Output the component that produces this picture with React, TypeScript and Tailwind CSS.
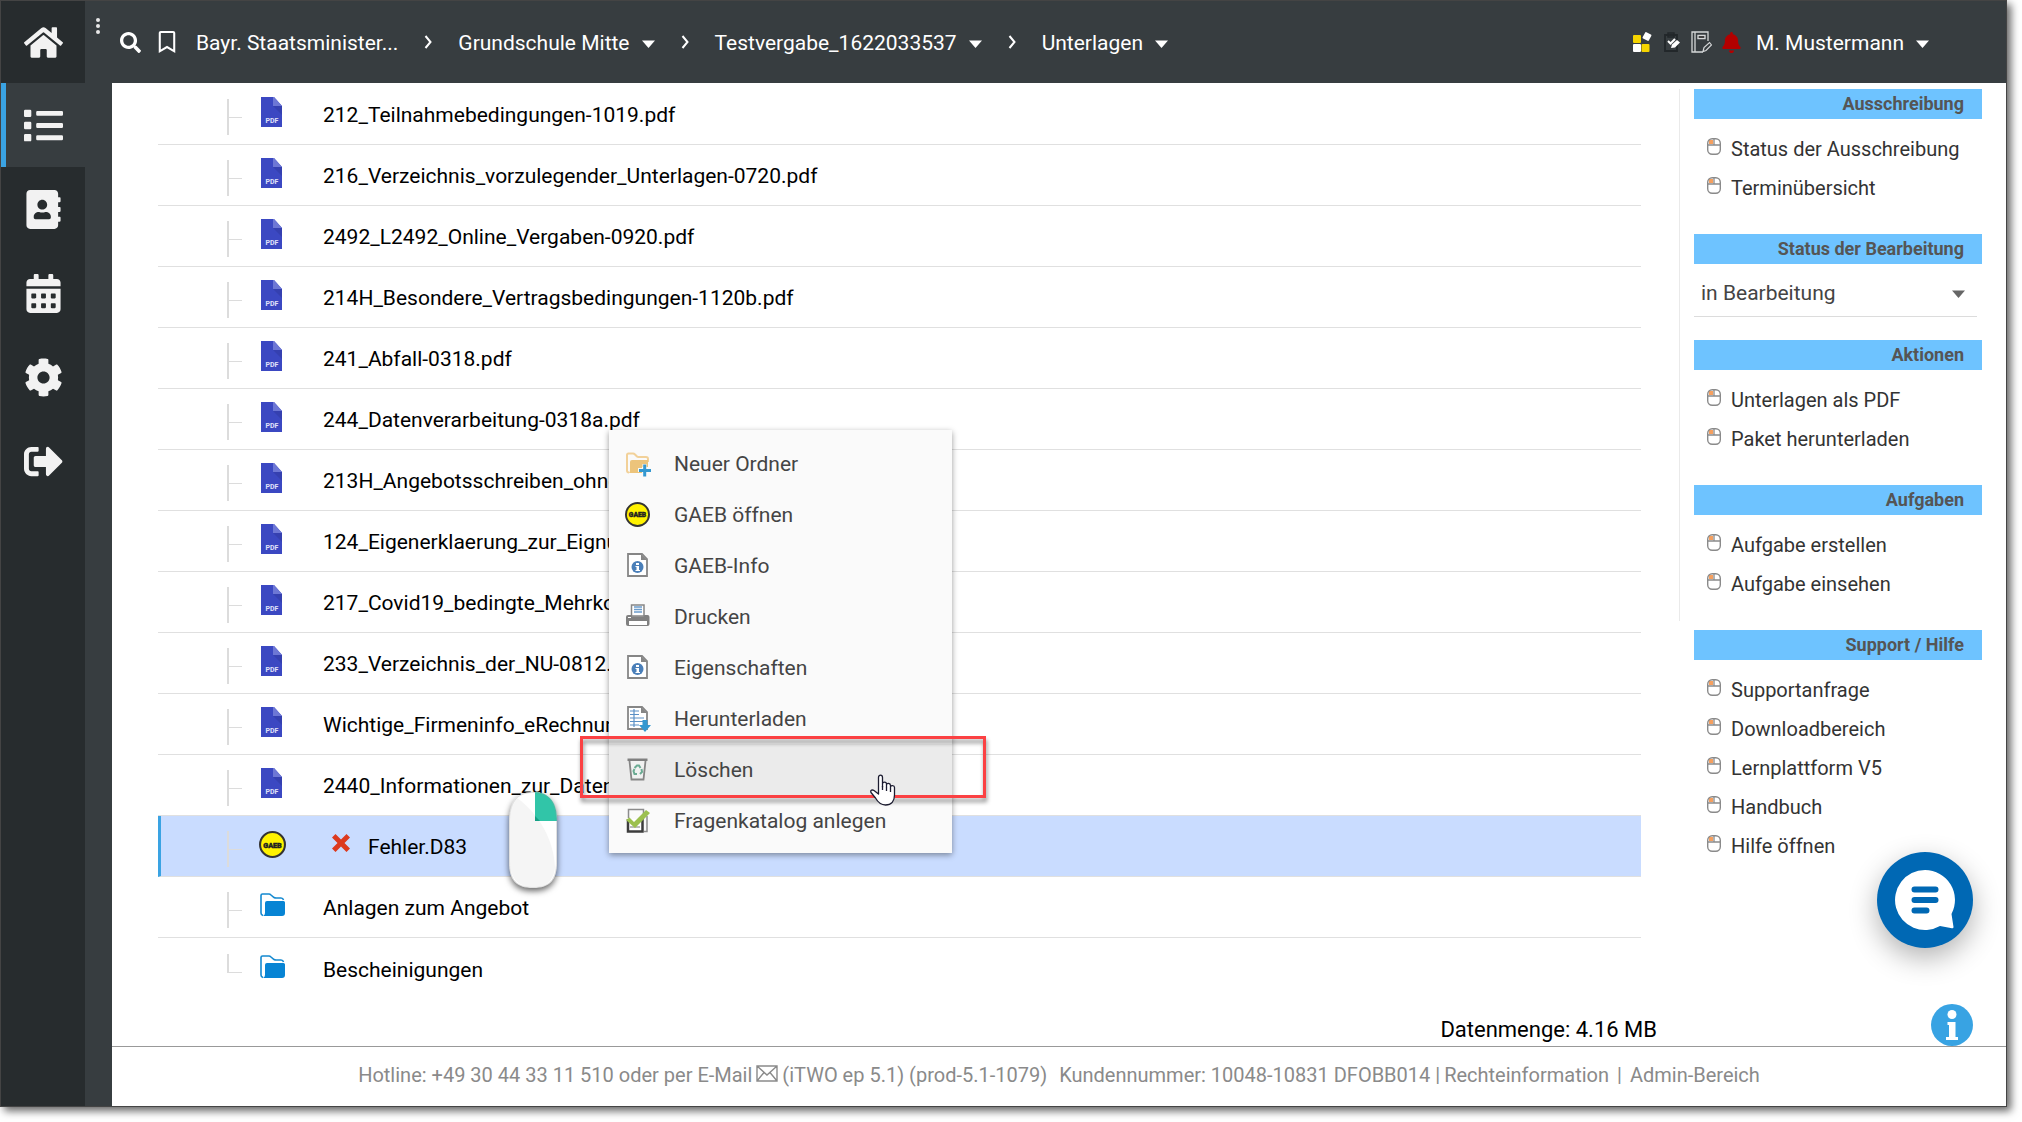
import React from 'react';
import { FaHome, FaList, FaAddressBook, FaCalendarAlt, FaCog, FaSignOutAlt, FaSearch, FaBell, FaRegBookmark } from 'react-icons/fa';

const files = [
  '212_Teilnahmebedingungen-1019.pdf',
  '216_Verzeichnis_vorzulegender_Unterlagen-0720.pdf',
  '2492_L2492_Online_Vergaben-0920.pdf',
  '214H_Besondere_Vertragsbedingungen-1120b.pdf',
  '241_Abfall-0318.pdf',
  '244_Datenverarbeitung-0318a.pdf',
  '213H_Angebotsschreiben_ohne_Lose-0920.pdf',
  '124_Eigenerklaerung_zur_Eignung-1019.pdf',
  '217_Covid19_bedingte_Mehrkosten.pdf',
  '233_Verzeichnis_der_NU-0812.pdf',
  'Wichtige_Firmeninfo_eRechnung.pdf',
  '2440_Informationen_zur_Datenerhebung.pdf',
];

const folders = ['Anlagen zum Angebot', 'Bescheinigungen'];

function Caret({ className = 'text-white' }: { className?: string }) {
  return (
    <svg width="13" height="8" viewBox="0 0 13 8" className={className} aria-hidden="true">
      <path d="M0 0.5h13L6.500 8z" fill="currentColor" />
    </svg>
  );
}

function Chevron() {
  return (
    <svg width="8" height="14" viewBox="0 0 8 14" fill="none" stroke="#fff" strokeWidth="2" className="mb-1" aria-hidden="true">
      <path d="M1.500 1l5 6-5 6" />
    </svg>
  );
}

function PdfIcon() {
  return (
    <svg width="22" height="30" viewBox="0 0 22 30" aria-hidden="true">
      <path d="M0 0h13l8 9v21H0z" fill="#3b48c2" />
      <path d="M12 0h1l8 9H12z" fill="#6d77d5" />
      <path d="M12 9h9v9z" fill="#3540b0" />
      <text x="11" y="26" textAnchor="middle" fontSize="7" fontWeight="700" fontFamily="Roboto, sans-serif" fill="#e0e2fa">PDF</text>
    </svg>
  );
}

function GaebIcon({ size }: { size: number }) {
  return (
    <svg width={size} height={size} viewBox="0 0 26 26" aria-hidden="true">
      <circle cx="13" cy="13" r="12" fill="#fff200" stroke="#333" strokeWidth="2" />
      <text x="13" y="16" textAnchor="middle" fontSize="7" fontWeight="900" fontFamily="Roboto, sans-serif" fill="#222" stroke="#222" strokeWidth="0.4">GAEB</text>
    </svg>
  );
}

function FolderIcon() {
  return (
    <svg width="25" height="24" viewBox="0 0 25 24" aria-hidden="true">
      <path d="M3 22.500Q1 22 1 20V2.500Q1 1 2.500 1H9q1 0 2 1l3 2.500q1 .5 2 .5h5q2 0 2.500 2" fill="none" stroke="#1489d0" strokeWidth="1.600" />
      <path d="M5 10q0-2 2-2h16.500q1.500 0 1.500 1.500V20q0 3-3 3H3q2-1 2-3z" fill="#0784d4" />
    </svg>
  );
}

function CrossIcon() {
  return (
    <svg width="20" height="20" viewBox="0 0 20 20" aria-hidden="true">
      <path d="M4.500 1L10 6.500 15.500 1 19 4.500 13.500 10l5.500 5.500-3.500 3.500L10 13.500 4.500 19 1 15.500 6.500 10 1 4.500z" fill="#dc3a1f" />
    </svg>
  );
}

function NewFolderIcon() {
  return (
    <svg width="26" height="26" viewBox="0 0 26 26" aria-hidden="true">
      <path d="M4 21.500q-2 0-2-2V4q0-1.500 1.500-1.500H8q1 0 2 1l2 2q.5.500 1.500.500H21q2 0 2 2v3" fill="none" stroke="#f2d199" strokeWidth="2" />
      <path d="M5 11q0-2 2-2h16v7h-6v6H4q1-1 1-3z" fill="#ecc47b" />
      <path d="M17.500 13h4v4H26v4h-4.500v4.500h-4V21H13v-4h4.500z" fill="#fafafa" />
      <path d="M18.200 13.500h3v4.500H26v3h-4.800v4.500h-3V21H14v-3h4.200z" fill="#3498d0" />
    </svg>
  );
}

function InfoPageIcon() {
  return (
    <svg width="26" height="26" viewBox="0 0 26 26" aria-hidden="true">
      <path d="M3 1h14l5 5v17H3z" fill="#fff" stroke="#868686" strokeWidth="1.800" />
      <path d="M16 1v6h6z" fill="#868686" />
      <circle cx="12.500" cy="14" r="6" fill="#4a7fb9" />
      <path d="M11 10h3v2h-3zM10.500 13H14v4h1v1h-4.500v-1h1v-3h-1z" fill="#fff" />
    </svg>
  );
}

function PrinterIcon() {
  return (
    <svg width="26" height="26" viewBox="0 0 26 26" aria-hidden="true">
      <path d="M6.500 1h12.500v11H6.500z" fill="#fff" stroke="#868686" strokeWidth="1.500" />
      <path d="M9 3h8M9 5.500h8M9 8h8" stroke="#6b9ccc" strokeWidth="1.500" />
      <path d="M3 11h3l1 1.500h11.500l1-1.500h3q2 0 2 2v7q0 2-2 2H3q-2 0-2-2v-7q0-2 2-2z" fill="#808080" />
      <path d="M4 17h18v4H4z" fill="#fff" />
      <path d="M3 13.500h3" stroke="#fff" />
    </svg>
  );
}

function DownloadIcon() {
  return (
    <svg width="26" height="26" viewBox="0 0 26 26" aria-hidden="true">
      <path d="M3 1h14l5 5v17H3z" fill="#fff" stroke="#868686" strokeWidth="1.800" />
      <path d="M16 1v6h6z" fill="#868686" />
      <path d="M5 5h9M5 8.500h9M5 12h14M5 15.500h14M5 19h9M9 3v18" stroke="#5a90c6" strokeWidth="1.200" />
      <path d="M17.500 14h5v5H26L20 26l-6-7h3.500z" fill="#3498d0" />
    </svg>
  );
}

function TrashIcon() {
  return (
    <svg width="26" height="26" viewBox="0 0 26 26" aria-hidden="true">
      <path d="M2.500 1.500h20V4h-20z" fill="#808080" />
      <path d="M4.500 4l2 18.500h12l2-18.500" fill="#f1f1f1" stroke="#868686" strokeWidth="1.800" />
      <path d="M9.500 11l2.500-2.500h2l1.500 2.500M16.500 12l.5 3-2 2M12 17H9.500L8.500 14l1-2" fill="none" stroke="#6bab93" strokeWidth="2" />
    </svg>
  );
}

function CheckIcon() {
  return (
    <svg width="26" height="26" viewBox="0 0 26 26" aria-hidden="true">
      <path d="M3.500 10V1.500h15V6M22 8v15.500h-3" fill="none" stroke="#8c8c8c" strokeWidth="1.500" />
      <path d="M3 11v12.500h14.500V11" fill="#fff" stroke="#3c3c3c" strokeWidth="2.500" />
      <path d="M5 19h10" stroke="#777" />
      <path d="M1 12l3.500-2.500L9 14 21 2l4 3L10 20z" fill="#9cc04f" />
    </svg>
  );
}

function MouseBullet() {
  return (
    <svg width="14" height="17" viewBox="0 0 14 17" fill="none" aria-hidden="true">
      <path d="M2 2h4v4H2z" fill="#f5a060" />
      <rect x="0.700" y="0.700" width="12.600" height="15.600" rx="4.500" stroke="#8a8a8a" strokeWidth="1.400" />
      <path d="M1 7h12M7 1v6" stroke="#8a8a8a" strokeWidth="1.300" />
    </svg>
  );
}

function TilesIcon() {
  return (
    <svg width="19" height="20" viewBox="0 0 19 20" aria-hidden="true">
      <rect x="0" y="3" width="8" height="8" rx="1" fill="#f5d400" />
      <rect x="0" y="12" width="8" height="8" rx="1" fill="#fff" />
      <rect x="8.500" y="12" width="8" height="8" rx="1" fill="#f5d400" />
      <rect x="10.500" y="1" width="7" height="7" rx="1" fill="#fff" transform="rotate(28 14 4.500)" />
    </svg>
  );
}

function ClipboardIcon() {
  return (
    <svg width="16" height="20" viewBox="0 0 16 20" aria-hidden="true">
      <path d="M1 3h12v16H1z" fill="none" stroke="#22272a" strokeWidth="1.800" />
      <path d="M4 1h6v4H4z" fill="none" stroke="#22272a" strokeWidth="1.500" />
      <path d="M4 9l2.500 2.500L11 7" fill="none" stroke="#fff" strokeWidth="2" />
      <path d="M7 16l1-3.500L13 8l3 2.500-5 5z" fill="#fff" />
    </svg>
  );
}

function NotebookIcon() {
  return (
    <svg width="21" height="22" viewBox="0 0 21 22" fill="none" stroke="#d5d7d8" aria-hidden="true">
      <path d="M17 10V1H1v20h11M4 1v20" strokeWidth="1.300" />
      <path d="M7 4.500h7v3H7z" strokeWidth="1.400" fill="#111" />
      <path d="M12 20.500l1-4 5.500-5 2 2.500-5.500 5.500z" strokeWidth="1.200" />
    </svg>
  );
}

function EnvelopeIcon() {
  return (
    <svg width="22" height="17" viewBox="0 0 22 17" fill="none" stroke="#8a8a8a" strokeWidth="1.400" aria-hidden="true">
      <path d="M1 1h20v15H1zM1 1l10 9L21 1M1 16l7-8.500M21 16l-7-8.500" />
    </svg>
  );
}

function RightClickMouse() {
  return (
    <svg width="48" height="96" viewBox="0 0 48 96" className="drop-shadow-[0_3px_3px_rgba(0,0,0,0.6)]" aria-hidden="true">
      <path d="M24 0C42 0 48 12 48 30v40c0 18-7 26-24 26S0 88 0 70V30C0 12 6 0 24 0z" fill="#fff" />
      <path d="M8 6C30 22 45 48 46 76c-2 14-9 19-22 19S1 88 1 70V30C1 19 3 11 8 6z" fill="#f5f5f5" />
      <path d="M26 0c16 1 22 12 22 29H26z" fill="#31c5a8" />
      <path d="M26 24l5 5h-5z" fill="#14a085" />
      <path d="M24 .5C41.500.5 47.500 12 47.500 30v40c0 18-7 25.500-23.500 25.500S.5 88 .5 70V30C.5 12 6.500.5 24 .5z" fill="none" stroke="#999" strokeOpacity="0.300" />
    </svg>
  );
}

function HandCursor() {
  return (
    <svg width="26" height="32" viewBox="0 0 26 32" aria-hidden="true">
      <path
        d="M8.500 20V3.500C8.500.3 12.500.3 12.500 3.500V13v-3c0-2.500 4-2.500 4 0v3-2c0-2.500 4-2 4 .5V14v-1c0-2 4-2 4 .5V21c0 6-3 10-9 10-5 0-8-3.500-10-7l-4.500-5.500c-1-2.500 1.500-3 3-2z"
        fill="#fff"
        stroke="#1c1c30"
        strokeWidth="1.300"
        strokeLinejoin="round"
      />
      <path d="M12.500 12v4M16.500 13v4M20.500 14v4" stroke="#1c1c30" strokeWidth="1.300" />
    </svg>
  );
}

const menuItems = [
  { label: 'Neuer Ordner', icon: <NewFolderIcon /> },
  { label: 'GAEB öffnen', icon: <GaebIcon size={25} /> },
  { label: 'GAEB-Info', icon: <InfoPageIcon /> },
  { label: 'Drucken', icon: <PrinterIcon /> },
  { label: 'Eigenschaften', icon: <InfoPageIcon /> },
  { label: 'Herunterladen', icon: <DownloadIcon /> },
  { label: 'Löschen', icon: <TrashIcon />, active: true },
  { label: 'Fragenkatalog anlegen', icon: <CheckIcon /> },
];

function ContextMenu() {
  return (
    <div role="menu" className="absolute top-[429px] left-[608px] w-[343px] bg-[#fafafa] pt-2 pb-[7px] text-[#444] shadow-[0_2px_6px_rgba(0,0,0,0.4)]">
      {menuItems.map((item) => (
        <button
          key={item.label}
          role="menuitem"
          className={`flex h-[51px] w-full items-center gap-[23px] pl-4 ${item.active ? 'bg-[#ebebeb]' : ''}`}
        >
          <span className="flex w-[26px]">{item.icon}</span>
          <span className="pt-[2px]">{item.label}</span>
        </button>
      ))}
    </div>
  );
}

function Sidebar() {
  const items = [
    { label: 'Start', icon: <FaHome size={39} /> },
    { label: 'Liste', icon: <FaList size={39} />, active: true },
    { label: 'Kontakte', icon: <FaAddressBook size={39} /> },
    { label: 'Kalender', icon: <FaCalendarAlt size={39} /> },
    { label: 'Einstellungen', icon: <FaCog size={39} /> },
    { label: 'Abmelden', icon: <FaSignOutAlt size={39} /> },
  ];

  return (
    <nav className="w-[84px] shrink-0 bg-[#272c2e] text-[#f2f2f2]">
      {items.map((item) => (
        <button
          key={item.label}
          aria-label={item.label}
          className={`flex h-[84px] w-full items-center justify-center first:h-[82px] ${item.active ? 'border-l-[5px] border-[#3aa3e3] bg-[#373d40] pr-[5px]' : ''}`}
        >
          {item.icon}
        </button>
      ))}
    </nav>
  );
}

function Crumb({ label }: { label: string }) {
  return (
    <button className="flex items-center gap-3 whitespace-nowrap">
      {label}
      <Caret />
    </button>
  );
}

function Header() {
  return (
    <header className="flex h-[82px] shrink-0 items-center bg-[#373d40] pr-[77px] text-white">
      <button aria-label="Mehr" className="mb-8 ml-[11px] flex flex-col gap-[2px]">
        <span className="h-1 w-1 rounded-full bg-[#e8e8e8]" />
        <span className="h-1 w-1 rounded-full bg-[#e8e8e8]" />
        <span className="h-1 w-1 rounded-full bg-[#e8e8e8]" />
      </button>
      <button aria-label="Suche" className="ml-5"><FaSearch size={21} /></button>
      <button aria-label="Lesezeichen" className="ml-[15px]"><FaRegBookmark size={22} /></button>
      <nav className="ml-[18px] flex items-center gap-[26px] pt-1">
        <button>Bayr. Staatsminister...</button>
        <Chevron />
        <Crumb label="Grundschule Mitte" />
        <Chevron />
        <Crumb label="Testvergabe_1622033537" />
        <Chevron />
        <Crumb label="Unterlagen" />
      </nav>
      <div className="ml-auto flex items-center">
        <button aria-label="Anwendungen"><TilesIcon /></button>
        <button aria-label="Aufgaben" className="ml-3"><ClipboardIcon /></button>
        <button aria-label="Notizen" className="ml-[11px]"><NotebookIcon /></button>
        <button aria-label="Meldungen" className="ml-[9px] text-[#b30000]"><FaBell size={21} /></button>
        <div className="ml-[14px] pt-1"><Crumb label="M. Mustermann" /></div>
      </div>
    </header>
  );
}

function Branch({ last }: { last?: boolean }) {
  return (
    <span className="mt-[6px] flex h-9 w-[15px] flex-col">
      <span className="h-[19px] border-b border-l-2 border-[#dcdcdc]" />
      {!last && <span className="flex-1 border-l-2 border-[#dcdcdc]" />}
    </span>
  );
}

function Row({ icon, name, last, selected }: { icon: React.ReactNode; name: string; last?: boolean; selected?: boolean }) {
  return (
    <li className={`flex h-[61px] items-center ${last ? '' : 'border-b border-[#e0e0e0]'} ${selected ? 'border-l-[3px] border-l-[#3aa3e3] bg-[#c9dcff] pl-[66px]' : 'pl-[69px]'}`}>
      <Branch last={last} />
      <span className="ml-3 flex w-9 justify-center pb-1">{icon}</span>
      <span className="ml-[33px] flex items-center gap-[17px] pt-1">
        {selected && <span className="pb-[10px] pl-2"><CrossIcon /></span>}
        {name}
      </span>
    </li>
  );
}

function SectionTitle({ title }: { title: string }) {
  return <h2 className="bg-[#6ec3ff] pr-[18px] text-right text-[18px] leading-[30px] font-bold text-[#555]">{title}</h2>;
}

function Section({ title, links }: { title: string; links: string[] }) {
  return (
    <section className="mb-[26px]">
      <SectionTitle title={title} />
      <ul className="pt-[10px] pb-px text-[20px]">
        {links.map((link) => (
          <li key={link} className="flex h-[39px] items-center gap-[10px] pl-[13px]">
            <span className="pb-1"><MouseBullet /></span>
            <a href="#">{link}</a>
          </li>
        ))}
      </ul>
    </section>
  );
}

function Footer() {
  return (
    <footer className="flex h-[60px] items-center justify-center border-t border-[#999] pb-[3px] text-[20px] whitespace-nowrap text-[#8a8a8a]">
      <span>Hotline: +49 30 44 33 11 510 oder per E-Mail</span>
      <a href="#" aria-label="E-Mail" className="mx-1 pb-1"><EnvelopeIcon /></a>
      <span>(iTWO ep 5.1) (prod-5.1-1079)</span>
      <span className="ml-3">Kundennummer: 10048-10831 DFOBB014 |</span>
      <a href="#" className="ml-1">Rechteinformation</a>
      <span className="mx-2">|</span>
      <a href="#">Admin-Bereich</a>
    </footer>
  );
}

export default function App() {
  return (
    <div className="min-h-screen bg-white pr-[15px] pb-[15px] font-['Roboto',sans-serif] text-[21px] text-black">
      <div className="relative flex min-h-[1107px] border border-[#444] shadow-[4px_4px_8px_rgba(0,0,0,0.6)]">
        <Sidebar />
        <div className="flex min-w-0 flex-1 flex-col bg-[#373d40]">
          <Header />
          <div className="ml-[27px] flex flex-1 flex-col bg-white">
            <div className="flex flex-1">
              <main className="ml-[46px] flex flex-1 flex-col pt-px">
                <ul className="mr-[38px]">
                  {files.map((name) => (
                    <Row key={name} icon={<PdfIcon />} name={name} />
                  ))}
                  <Row icon={<GaebIcon size={27} />} name="Fehler.D83" selected />
                  {folders.map((name, i) => (
                    <Row key={name} icon={<FolderIcon />} name={name} last={i === folders.length - 1} />
                  ))}
                </ul>
                <p className="mt-auto mr-[22px] text-right text-[22px]">Datenmenge: 4.16 MB</p>
              </main>
              <aside className="flex w-[327px] items-start pt-[6px] text-[#333]">
                <div className="h-[532px] w-[15px] shrink-0 border-l border-[#eaeaea]" />
                <div className="mr-6 flex-1">
                  <Section title="Ausschreibung" links={['Status der Ausschreibung', 'Terminübersicht']} />
                  <SectionTitle title="Status der Bearbeitung" />
                  <div className="mr-[5px] mb-[23px] flex h-[53px] items-center border-b border-[#dcdcdc] pt-2 pr-3 pl-[7px]">
                    <select aria-label="Status der Bearbeitung" className="flex-1 appearance-none text-[#444]">
                      <option>in Bearbeitung</option>
                    </select>
                    <Caret className="text-[#666]" />
                  </div>
                  <Section title="Aktionen" links={['Unterlagen als PDF', 'Paket herunterladen']} />
                  <Section title="Aufgaben" links={['Aufgabe erstellen', 'Aufgabe einsehen']} />
                  <Section title="Support / Hilfe" links={['Supportanfrage', 'Downloadbereich', 'Lernplattform V5', 'Handbuch', 'Hilfe öffnen']} />
                </div>
              </aside>
            </div>
            <Footer />
          </div>
        </div>

        <ContextMenu />

        {/* Hinweis-Markierungen */}
        <div className="pointer-events-none absolute top-[735px] left-[579px] h-[62px] w-[406px] border-[3px] border-[#fb4143] drop-shadow-[1px_4px_2px_rgba(0,0,0,0.45)]" />
        <div className="pointer-events-none absolute top-[791px] left-[508px]"><RightClickMouse /></div>
        <div className="pointer-events-none absolute top-[773px] left-[869px]"><HandCursor /></div>

        <button aria-label="Chat" className="absolute right-[33px] bottom-[158px] rounded-full bg-[#0068b4] shadow-[0_10px_28px_rgba(0,0,0,0.3)]">
          <svg width="96" height="96" viewBox="0 0 96 96" aria-hidden="true">
            <path d="M48 18a30 30 0 0 1 26.500 44L76.500 75q0 1.500-1.500 1.200L63 74A30 30 0 1 1 48 18z" fill="#fff" />
            <path d="M37.500 37.500h21M37.500 48h21M37.500 58.500h12" stroke="#0068b4" strokeWidth="6" strokeLinecap="round" />
          </svg>
        </button>
        <button aria-label="Information" className="absolute right-[33px] bottom-[60px]">
          <svg width="42" height="42" viewBox="0 0 42 42" aria-hidden="true">
            <circle cx="21" cy="21" r="21" fill="#38a3e3" />
            <circle cx="21" cy="10.500" r="4.500" fill="#fff" />
            <path d="M16.500 18h8v15H27v3H15v-3h3V21h-1.500z" fill="#fff" />
          </svg>
        </button>
      </div>
    </div>
  );
}
